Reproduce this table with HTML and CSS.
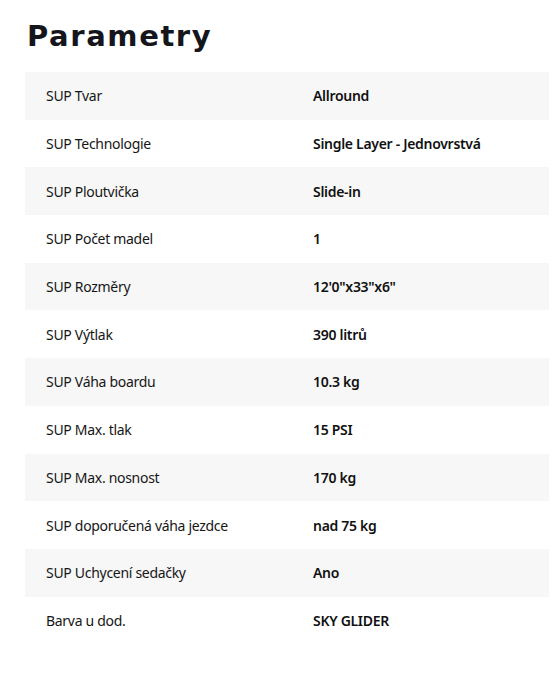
FILE: index.html
```html
<!DOCTYPE html>
<html lang="cs">
<head>
<meta charset="utf-8">
<link rel="stylesheet" href="styles.css">
</head>
<body>
<section class="params">
  <h2 class="title">Parametry</h2>
  <div class="table">
    <div class="row"><div class="label">SUP Tvar</div><div class="value">Allround</div></div>
    <div class="row"><div class="label">SUP Technologie</div><div class="value">Single Layer - Jednovrstvá</div></div>
    <div class="row"><div class="label">SUP Ploutvička</div><div class="value">Slide-in</div></div>
    <div class="row"><div class="label">SUP Počet madel</div><div class="value">1</div></div>
    <div class="row"><div class="label">SUP Rozměry</div><div class="value">12'0"x33"x6"</div></div>
    <div class="row"><div class="label">SUP Výtlak</div><div class="value">390 litrů</div></div>
    <div class="row"><div class="label">SUP Váha boardu</div><div class="value">10.3 kg</div></div>
    <div class="row"><div class="label">SUP Max. tlak</div><div class="value">15 PSI</div></div>
    <div class="row"><div class="label">SUP Max. nosnost</div><div class="value">170 kg</div></div>
    <div class="row"><div class="label">SUP doporučená váha jezdce</div><div class="value">nad 75 kg</div></div>
    <div class="row"><div class="label">SUP Uchycení sedačky</div><div class="value">Ano</div></div>
    <div class="row"><div class="label">Barva u dod.</div><div class="value">SKY GLIDER</div></div>
  </div>
</section>
</body>
</html>
```
FILE: styles.css
```css
html, body {
  margin: 0;
  padding: 0;
  background: #ffffff;
}
.params {
  padding: 18px 9px 0 25px;
  font-family: "Noto Sans", "Open Sans", sans-serif;
  color: #161616;
}
.title {
  margin: 0 0 17px 2px;
  font-family: "DejaVu Sans", sans-serif;
  font-weight: 700;
  font-size: 29px;
  line-height: 37px;
  color: #15161c;
  letter-spacing: 1.6px;
}
.table {
  display: flex;
  flex-direction: column;
}
.row {
  display: grid;
  grid-template-columns: 288px 1fr;
  height: 47.7px;
  align-items: center;
  font-size: 14px;
  letter-spacing: -0.3px;
}
.row:nth-child(odd) {
  background: #f7f7f7;
}
.label {
  padding-left: 21px;
  font-weight: 400;
}
.value {
  font-weight: 600;
  color: #111;
}
```
